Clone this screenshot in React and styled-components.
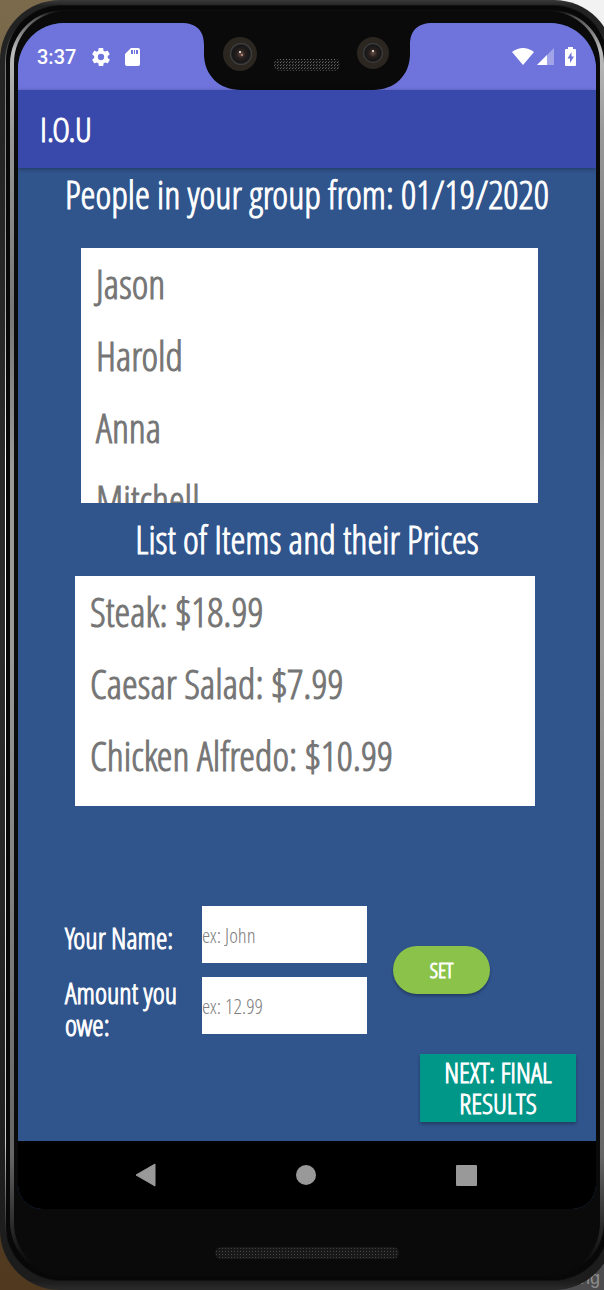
import React from "react";
import styled, { createGlobalStyle } from "styled-components";

const GlobalStyle = createGlobalStyle`
  *, *::before, *::after { box-sizing: border-box; }
  html, body { margin: 0; padding: 0; }
  body { font-family: "Open Sans Condensed Light", "Roboto Condensed", sans-serif; font-weight: 300; }
  h1, h2, ul, p { margin: 0; padding: 0; font-weight: 300; }
  button, input { font: inherit; }
`;

const Desktop = styled.div`
  position: relative;
  min-height: 100vh;
  overflow: hidden;
  display: flex;
  background:
    linear-gradient(90deg, transparent 50%, #f2f2f2 50%) top / 100% 50% no-repeat,
    linear-gradient(90deg, transparent 50%, #4c4c4e 50%) bottom / 100% 50% no-repeat,
    linear-gradient(#7b6a4c, #50391f);
`;

const Caption = styled.span`
  position: absolute;
  right: 4px;
  bottom: 2px;
  font: 18px/20px "Liberation Sans", sans-serif;
  color: #8c8c8c;
`;

const Shell = styled.div`
  position: relative;
  flex: 1;
  display: flex;
  margin-right: -10px;
  padding: 5px 5px 9px;
  border-radius: 60px;
  background: linear-gradient(#3a3a3a, #222 6px, #2b2b2b 50%, #1c1c1c calc(100% - 9px), #2b2b2b);
`;

const OuterRim = styled.div`
  flex: 1;
  display: flex;
  padding: 1px;
  border-radius: 56px;
  background: linear-gradient(#111, #151515 20px, #777 60px, #aaa 300px, #fff 460px, #fff 640px, #ccc calc(100% - 140px), #111 calc(100% - 40px));
`;

const Groove = styled.div`
  flex: 1;
  display: flex;
  padding: 4px;
  border-radius: 55px;
  background: #080808;
`;

const InnerRim = styled.div`
  flex: 1;
  display: flex;
  padding: 1px 4px;
  border-radius: 54px;
  background: linear-gradient(#0a0a0a, #555 8px, #bbb 40px, #999 120px, #777 300px, #999 460px, #999 640px, #666 calc(100% - 120px), #0a0a0a calc(100% - 12px));
`;

const Bezel = styled.div`
  flex: 1;
  min-width: 0;
  display: flex;
  flex-direction: column;
  padding: 12px 4px 0;
  border-radius: 52px;
  background: #0a0a0a;
`;

const Screen = styled.div`
  flex: 1;
  display: flex;
  flex-direction: column;
  overflow: hidden;
  border-radius: 46px 46px 24px 24px;
  background: #30548c;
`;

const StatusBar = styled.div`
  display: grid;
  grid-template-columns: 1fr auto 1fr;
  align-items: center;
  height: 67px;
  background: #6f74dc;
`;

const StatusGroup = styled.div`
  display: flex;
  align-items: center;
  justify-content: ${(p) => (p.$end ? "flex-end" : "flex-start")};
  padding: ${(p) => (p.$end ? "0 20px 0 0" : "0 0 0 19px")};
  color: #fff;
`;

const Clock = styled.span`
  font: 500 20px/24px Roboto, sans-serif;
  margin-right: 16px;
`;

const Glyph = styled.svg`
  display: block;
  margin-left: ${(p) => p.$gap || 0}px;
`;

const AppBar = styled.header`
  position: relative;
  height: 78px;
  padding: 0 22px;
  display: flex;
  align-items: center;
  background: #3949ab;
  box-shadow: 0 1px 4px rgba(0, 0, 0, 0.35);
`;

const AppTitle = styled.h1`
  font-size: 34px;
  line-height: 36px;
  color: #fff;
  -webkit-text-stroke: 1px;
`;

const Content = styled.main`
  flex: 1;
  display: flex;
  flex-direction: column;
  color: #fff;
`;

const SectionTitle = styled.h2`
  font-size: 38px;
  line-height: ${(p) => p.$line}px;
  text-align: center;
  white-space: nowrap;
  -webkit-text-stroke: 1px;
`;

const List = styled.ul`
  height: ${(p) => p.$height}px;
  margin: ${(p) => p.$margin};
  padding-left: 15px;
  overflow: hidden;
  list-style: none;
  background: #fff;
`;

const ListItem = styled.li`
  font-size: 40px;
  line-height: 72px;
  color: #757575;
  white-space: nowrap;
  -webkit-text-stroke: 1px;
`;

const Form = styled.form`
  flex: 1;
  display: flex;
  flex-direction: column;
  justify-content: flex-end;
  padding: 100px 20px 19px 47px;
`;

const EntryRow = styled.div`
  display: flex;
  align-items: center;
  gap: 26px;
`;

const Fields = styled.div`
  display: grid;
  grid-template-columns: 137px 165px;
  row-gap: 7px;
`;

const Label = styled.label`
  display: flex;
  align-items: center;
  height: 64px;
  padding-right: 16px;
  font-size: 29px;
  line-height: 32px;
  -webkit-text-stroke: 1px;
`;

const Input = styled.input`
  width: 100%;
  height: 57px;
  padding: 0;
  border: 0;
  border-radius: 0;
  background: #fff;
  color: #333;
  font-size: 21px;
  &::placeholder { color: #808080; opacity: 1; }
`;

const SetButton = styled.button`
  width: 97px;
  height: 48px;
  margin-bottom: 8px;
  padding: 0;
  border: 0;
  border-radius: 24px;
  background: #8bc34a;
  color: #fff;
  font-size: 21px;
  -webkit-text-stroke: 1px;
  box-shadow: 0 2px 3px rgba(0, 0, 0, 0.3);
`;

const NextButton = styled.button`
  align-self: flex-end;
  width: 156px;
  height: 68px;
  margin-top: 13px;
  padding: 0 16px;
  border: 0;
  background: #009688;
  color: #fff;
  font-size: 28px;
  line-height: 31px;
  -webkit-text-stroke: 1px;
  box-shadow: 0 2px 3px rgba(0, 0, 0, 0.3);
`;

const NavBar = styled.nav`
  display: flex;
  align-items: center;
  justify-content: center;
  gap: 128px;
  height: 68px;
  background: #000;
`;

const NavButton = styled.button`
  display: block;
  width: 32px;
  height: 32px;
  padding: 0;
  border: 0;
  background: none;
`;

const Chin = styled.div`
  display: flex;
  justify-content: center;
  height: 66px;
  padding-top: 38px;
`;

const Speaker = styled.div`
  width: 184px;
  height: 12px;
  border-radius: 6px;
  background:
    radial-gradient(circle, #444 1px, transparent 1px) 0 0 / 3px 3px,
    #181818;
`;

function Notch() {
  return (
    <Glyph width="252" height="67" viewBox="0 0 252 67" aria-hidden="true">
      <defs>
        <pattern id="mesh" width="3" height="3" patternUnits="userSpaceOnUse">
          <rect width="3" height="3" fill="#111" />
          <rect width="1" height="1" fill="#666" />
          <rect x="1" y="2" width="1" height="1" fill="#444" />
        </pattern>
        <radialGradient id="lens">
          <stop offset="0" stopColor="#6a5148" />
          <stop offset="0.4" stopColor="#29201e" />
          <stop offset="0.8" stopColor="#171719" />
          <stop offset="1" stopColor="#4a4a4a" />
        </radialGradient>
      </defs>
      <path
        d="M0 0C16 0 23 8 23 22V31C23 52 38 67 60 67H192C214 67 229 52 229 31V22C229 8 236 0 252 0Z"
        fill="#0a0a0a"
      />
      <circle cx="59" cy="31" r="17" fill="#2b2620" />
      <circle cx="60" cy="31" r="11" fill="url(#lens)" />
      <circle cx="59" cy="29" r="1" fill="#fff" />
      <circle cx="61" cy="32" r="1" fill="#c09080" />
      <circle cx="192" cy="30" r="16" fill="#2b2620" />
      <circle cx="192" cy="30" r="10" fill="url(#lens)" />
      <circle cx="192" cy="28" r="1" fill="#fff" />
      <rect x="93" y="36" width="66" height="12" rx="5" fill="url(#mesh)" />
    </Glyph>
  );
}

const people = ["Jason", "Harold", "Anna", "Mitchell"];
const items = ["Steak: $18.99", "Caesar Salad: $7.99", "Chicken Alfredo: $10.99"];

export default function App() {
  return (
    <Desktop>
      <GlobalStyle />
      <Caption>ng</Caption>
      <Shell>
        <OuterRim>
          <Groove>
            <InnerRim>
              <Bezel>
                <Screen>
                  <StatusBar>
                    <StatusGroup>
                      <Clock>3:37</Clock>
                      <Glyph width="18" height="18" viewBox="2 2 20 20" fill="currentColor" aria-hidden="true">
                        <path d="M19.4 13c0-.3.1-.6.1-1s0-.7-.1-1l2.1-1.700c.2-.2.2-.4.1-.6l-2-3.500c-.1-.2-.3-.3-.6-.2l-2.500 1c-.5-.4-1.100-.7-1.700-1l-.4-2.600c0-.2-.2-.4-.5-.4h-4c-.2 0-.5.200-.5.400L9 5.100c-.6.200-1.200.600-1.700 1L4.900 5c-.2-.1-.5 0-.6.200l-2 3.500c-.1.200-.1.500.1.600L4.500 11c0 .300-.1.600-.1 1s0 .7.1 1l-2.100 1.700c-.2.200-.2.400-.1.600l2 3.500c.1.200.3.300.6.200l2.500-1c.5.400 1.100.7 1.700 1l.4 2.600c0 .200.200.400.500.400h4c.300 0 .500-.200.500-.400l.4-2.600c.6-.3 1.200-.6 1.700-1l2.500 1c.200.100.500 0 .600-.2l2-3.500c.100-.2.100-.5-.1-.6zM12 15.500a3.500 3.500 0 1 1 0-7 3.500 3.500 0 0 1 0 7z" />
                      </Glyph>
                      <Glyph $gap={15} width="15" height="18" viewBox="0 0 15 18" aria-hidden="true">
                        <path d="M6 0h7a2 2 0 0 1 2 2v14a2 2 0 0 1-2 2H2a2 2 0 0 1-2-2V6z" fill="#fff" />
                        <path d="M6 2h2v4H6zM9 2h1v4H9zM11 2h2v4h-2z" fill="#6f74dc" />
                      </Glyph>
                    </StatusGroup>
                    <Notch />
                    <StatusGroup $end>
                      <Glyph width="22" height="17" viewBox="0 0 22 17" aria-hidden="true">
                        <path d="M0 4Q11-4 22 4L11 17z" fill="#fff" />
                      </Glyph>
                      <Glyph $gap={3} width="17" height="17" viewBox="0 0 17 17" aria-hidden="true">
                        <path d="M17 0V17H0z" fill="#fff" opacity="0.35" />
                        <path d="M10 7V17H0z" fill="#fff" />
                      </Glyph>
                      <Glyph $gap={11} width="11" height="19" viewBox="0 0 11 19" aria-hidden="true">
                        <path d="M3 0h5v2h2a1 1 0 0 1 1 1v15a1 1 0 0 1-1 1H1a1 1 0 0 1-1-1V3a1 1 0 0 1 1-1h2z" fill="#fff" />
                        <path d="M6.500 5 2.500 11.500H5V16l4-6.500H6.500z" fill="#6f74dc" />
                      </Glyph>
                    </StatusGroup>
                  </StatusBar>
                  <AppBar>
                    <AppTitle>I.O.U</AppTitle>
                  </AppBar>
                  <Content>
                    <SectionTitle $line={52}>People in your group from: 01/19/2020</SectionTitle>
                    <List $height={255} $margin="28px 58px 0 63px">
                      {people.map((name) => (
                        <ListItem key={name}>{name}</ListItem>
                      ))}
                    </List>
                    <SectionTitle $line={73}>List of Items and their Prices</SectionTitle>
                    <List $height={230} $margin="0 61px 0 57px">
                      {items.map((item) => (
                        <ListItem key={item}>{item}</ListItem>
                      ))}
                    </List>
                    <Form onSubmit={(e) => e.preventDefault()}>
                      <EntryRow>
                        <Fields>
                          <Label htmlFor="name">Your Name:</Label>
                          <Input id="name" placeholder="ex: John" />
                          <Label htmlFor="amount">Amount you owe:</Label>
                          <Input id="amount" inputMode="decimal" placeholder="ex: 12.99" />
                        </Fields>
                        <SetButton type="submit">SET</SetButton>
                      </EntryRow>
                      <NextButton type="button">NEXT: FINAL RESULTS</NextButton>
                    </Form>
                  </Content>
                  <NavBar>
                    <NavButton type="button" aria-label="Back">
                      <Glyph width="32" height="32" viewBox="0 0 32 32">
                        <path d="M24 5V27L5 16z" fill="#999" stroke="#999" strokeLinejoin="round" />
                      </Glyph>
                    </NavButton>
                    <NavButton type="button" aria-label="Home">
                      <Glyph width="32" height="32" viewBox="0 0 32 32">
                        <circle cx="15" cy="16" r="10" fill="#999" />
                      </Glyph>
                    </NavButton>
                    <NavButton type="button" aria-label="Recent apps">
                      <Glyph width="32" height="32" viewBox="0 0 32 32">
                        <rect x="5" y="6" width="21" height="21" rx="1" fill="#999" />
                      </Glyph>
                    </NavButton>
                  </NavBar>
                </Screen>
                <Chin>
                  <Speaker />
                </Chin>
              </Bezel>
            </InnerRim>
          </Groove>
        </OuterRim>
      </Shell>
    </Desktop>
  );
}
